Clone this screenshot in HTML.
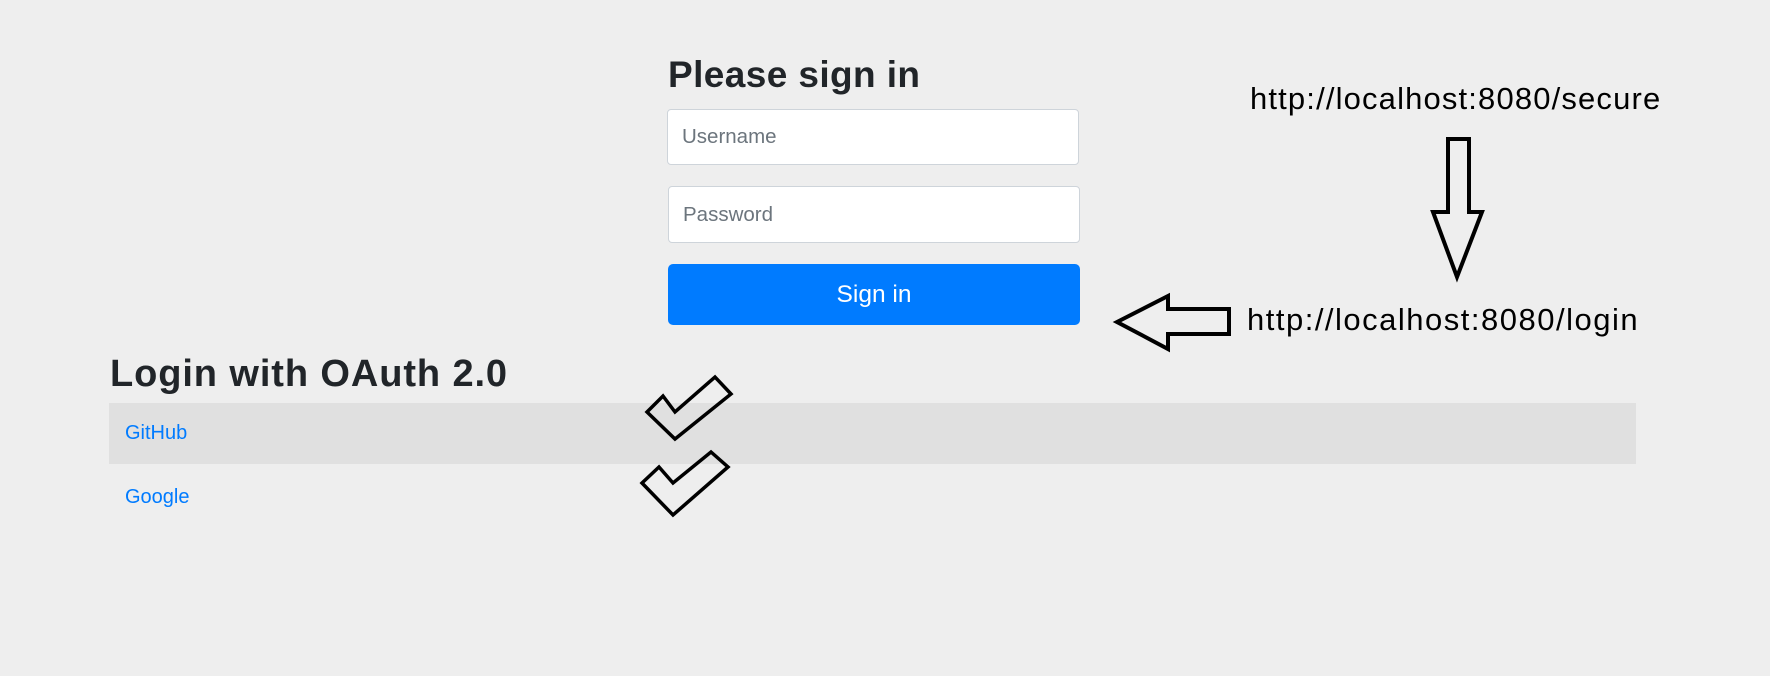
<!DOCTYPE html>
<html><head><meta charset="utf-8"><style>
body{margin:0;width:1770px;height:676px;background:#eeeeee;font-family:"Liberation Sans",sans-serif;position:relative;overflow:hidden}
.a{position:absolute}
h2{margin:0;font-weight:bold;color:#212529}
.inp{position:absolute;background:#fff;border:1px solid #ced4da;border-radius:4px;box-sizing:border-box;color:#6c757d;font-size:20.5px;padding-left:14px;display:flex;align-items:center}
.btn{background:#007bff;color:#fff;border-radius:5px;font-size:24.5px;display:flex;align-items:center;justify-content:center}
.url{font-size:31px;color:#000}
a{color:#007bff;text-decoration:none;font-size:20px}
</style></head><body>
<h2 class="a" style="left:668px;top:54px;font-size:37px;letter-spacing:0.4px">Please sign in</h2>
<div class="inp" style="left:667px;top:109px;width:412px;height:56px">Username</div>
<div class="inp" style="left:668px;top:186px;width:412px;height:57px">Password</div>
<div class="a btn" style="left:668px;top:264px;width:412px;height:61px">Sign in</div>
<h2 class="a" style="left:110px;top:353px;font-size:38px;letter-spacing:0.9px">Login with OAuth 2.0</h2>
<div class="a" style="left:109px;top:403px;width:1527px;height:61px;background:#e0e0e0"></div>
<a class="a" style="left:125px;top:422px">GitHub</a>
<a class="a" style="left:125px;top:486px">Google</a>
<div class="a url" style="left:1250px;top:81px;letter-spacing:1.15px">http://localhost:8080/secure</div>
<div class="a url" style="left:1247px;top:302px;letter-spacing:1.5px">http://localhost:8080/login</div>
<svg class="a" style="left:0;top:0" width="1770" height="676">
<g fill="none" stroke="#000" stroke-width="4">
<polygon points="1448,139 1469,139 1469,212 1482,212 1457,277 1433,212 1448,212"/>
<polygon points="1117,322 1168,296 1168,309 1229,309 1229,334 1168,334 1168,349"/>
</g>
<g fill="none" stroke="#000" stroke-width="3.5">
<polygon points="647,412 663,396 675,412 715,377 731,394 675,439"/>
<polygon points="642,483 659,467 673,483 711,452 728,467 673,515"/>
</g>
</svg>
</body></html>
